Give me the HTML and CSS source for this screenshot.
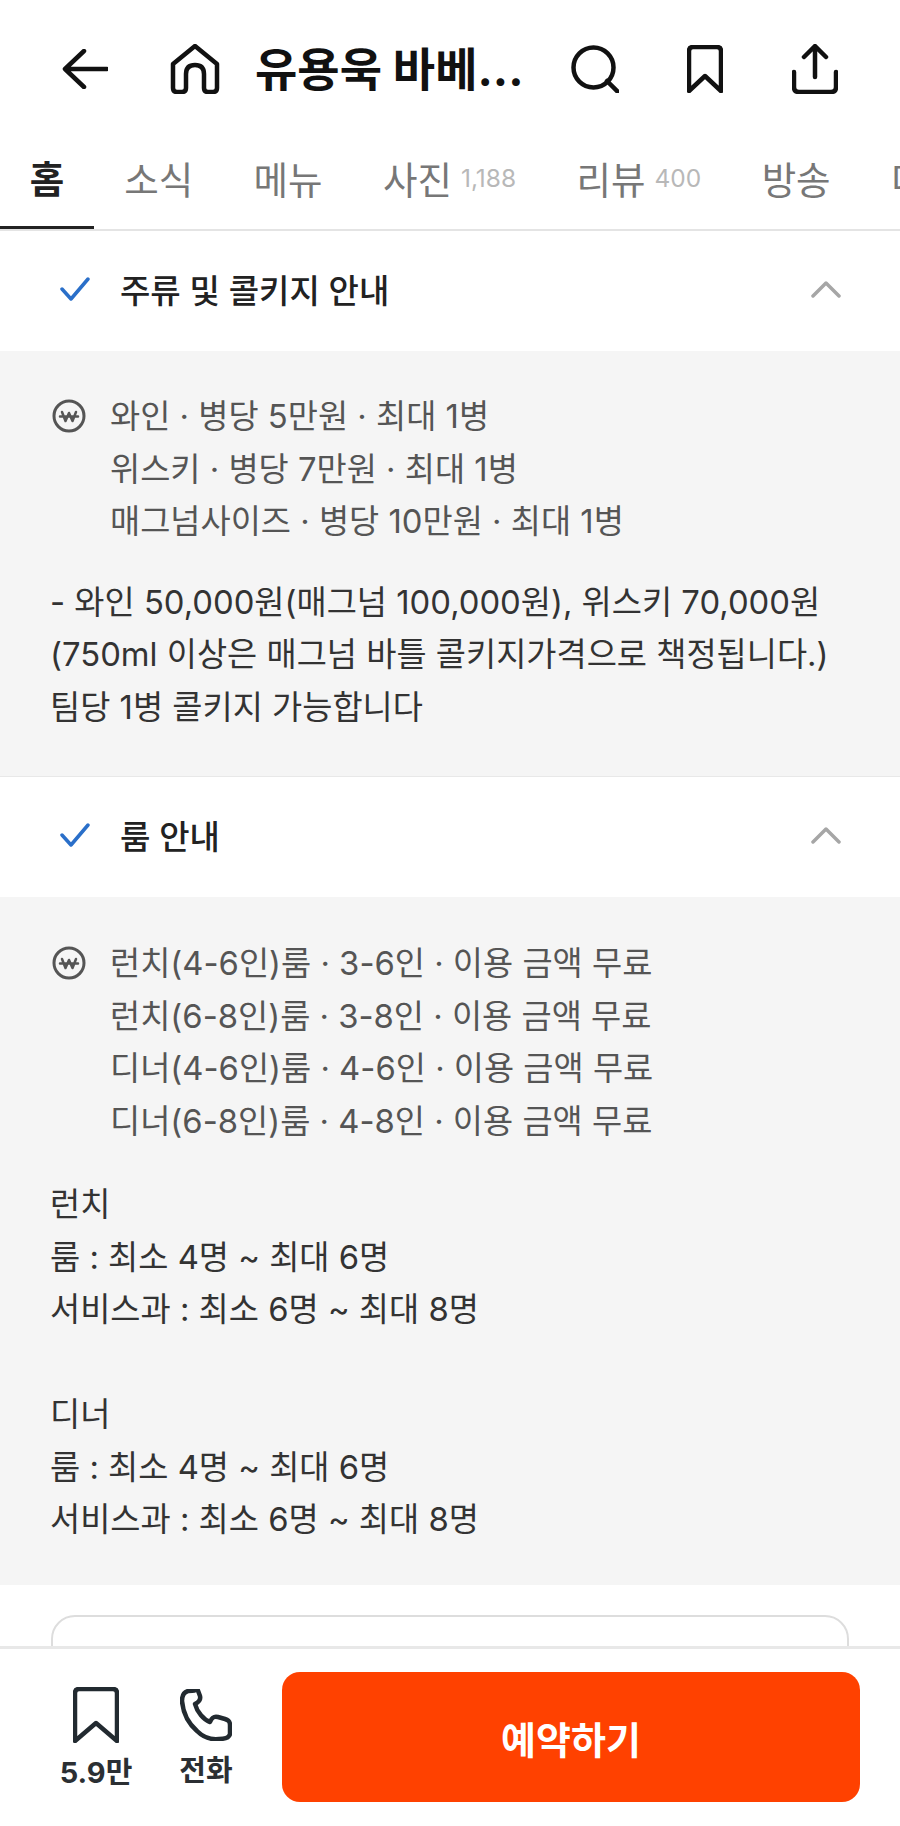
FILE: index.html
```html
<!DOCTYPE html>
<html lang="ko">
<head>
    <meta charset="UTF-8">
    <meta name="viewport" content="width=device-width, initial-scale=1.0">
    <title>유용욱 바베큐</title>
    <link rel="stylesheet" href="styles.css">
</head>
<body>
<div class="page">
    <header class="topbar">
        <svg class="icon icon-back" viewBox="0 0 46 40"><path d="M22 2 3 20l19 18M3 20h42"/></svg>
        <svg class="icon icon-home" viewBox="0 0 50 50"><path d="M25 2 3 20v24q0 4 4 4h5q4 0 4-4V30q0-9 9-9t9 9v14q0 4 4 4h5q4 0 4-4V20z"/></svg>
        <h1 class="title">유용욱 바베...</h1>
        <svg class="icon icon-search" viewBox="0 0 48 48"><circle cx="22.500" cy="22.500" r="20"/><path d="m36 36 11 11"/></svg>
        <svg class="icon icon-bookmark" viewBox="0 0 36 48"><path d="M6 2h24q4 0 4 4v40L18 31 2 46V6q0-4 4-4z"/></svg>
        <svg class="icon icon-share" viewBox="0 0 46 50"><path d="M23 33V3M12 13 23 2l11 11M2 28v15q0 5 5 5h32q5 0 5-5V28"/></svg>
    </header>

    <nav class="tabs">
        <a class="tab tab-active">홈</a>
        <a class="tab">소식</a>
        <a class="tab">메뉴</a>
        <a class="tab">사진<span class="count">1,188</span></a>
        <a class="tab">리뷰<span class="count">400</span></a>
        <a class="tab">방송</a>
        <a class="tab">더보기</a>
    </nav>

    <main class="content">
        <section class="section">
            <div class="section-head">
                <svg class="check" viewBox="0 0 30 24"><path d="m2 12 9 10L28 2"/></svg>
                <h2>주류 및 콜키지 안내</h2>
                <svg class="chevron" viewBox="0 0 30 18"><path d="M2 16 15 3l13 13"/></svg>
            </div>
            <div class="section-body">
                <div class="price">
                    <svg class="won" viewBox="0 0 34 34"><circle cx="17" cy="17" r="15"/><path class="won-mark" d="m10 13 3.500 9 3.500-8 3.500 8 3.500-9M8 17.500h18"/></svg>
                    <ul>
                        <li>와인 · 병당 5만원 · 최대 1병</li>
                        <li>위스키 · 병당 7만원 · 최대 1병</li>
                        <li>매그넘사이즈 · 병당 10만원 · 최대 1병</li>
                    </ul>
                </div>
                <p class="note">- 와인 50,000원(매그넘 100,000원), 위스키 70,000원<br>(750ml 이상은 매그넘 바틀 콜키지가격으로 책정됩니다.)<br>팀당 1병 콜키지 가능합니다</p>
            </div>
        </section>

        <section class="section section-rule">
            <div class="section-head">
                <svg class="check" viewBox="0 0 30 24"><path d="m2 12 9 10L28 2"/></svg>
                <h2>룸 안내</h2>
                <svg class="chevron" viewBox="0 0 30 18"><path d="M2 16 15 3l13 13"/></svg>
            </div>
            <div class="section-body">
                <div class="price">
                    <svg class="won" viewBox="0 0 34 34"><circle cx="17" cy="17" r="15"/><path class="won-mark" d="m10 13 3.500 9 3.500-8 3.500 8 3.500-9M8 17.500h18"/></svg>
                    <ul>
                        <li>런치(4-6인)룸 · 3-6인 · 이용 금액 무료</li>
                        <li>런치(6-8인)룸 · 3-8인 · 이용 금액 무료</li>
                        <li>디너(4-6인)룸 · 4-6인 · 이용 금액 무료</li>
                        <li>디너(6-8인)룸 · 4-8인 · 이용 금액 무료</li>
                    </ul>
                </div>
                <p class="note">런치<br>룸 : 최소 4명 ~ 최대 6명<br>서비스과 : 최소 6명 ~ 최대 8명<br><br>디너<br>룸 : 최소 4명 ~ 최대 6명<br>서비스과 : 최소 6명 ~ 최대 8명</p>
            </div>
        </section>

        <div class="card"></div>
    </main>

    <footer class="actionbar">
        <div class="action action-save">
            <svg class="action-icon" viewBox="0 0 46 56"><path d="M6 2h34q4 0 4 4v48L23 36 2 54V6q0-4 4-4z"/></svg>
            <span>5.9만</span>
        </div>
        <div class="action action-call">
            <svg class="action-icon" viewBox="0 0 52 52"><path d="M8 2c-4 1-6 5-6 10 1 12 7 23 15 30 5 5 13 9 22 8 6 0 10-1 11-5v-9c0-4-2-5-5-6l-7-2c-4-1-6 0-8 5-6-2-13-10-15-18 4-2 6-4 5-8l-3-8C16 3 13 1 8 2z"/></svg>
            <span>전화</span>
        </div>
        <button class="reserve" type="button">예약하기</button>
    </footer>
</div>
</body>
</html>
```

FILE: styles.css
```css
* {
    box-sizing: border-box;
}
body {
    margin: 0;
    font-family: Inter, "Noto Sans CJK KR", sans-serif;
    color: #333;
    background: #fff;
}
.page {
    display: flex;
    flex-direction: column;
    height: 1826px;
    overflow: hidden;
}
svg {
    display: block;
    flex: none;
    fill: none;
    stroke-linecap: round;
    stroke-linejoin: round;
}

/* top bar */
.topbar {
    display: flex;
    align-items: center;
    height: 138px;
    padding-left: 62px;
}
.icon {
    stroke: #111;
    stroke-width: 4.5;
}
.icon-back {
    width: 46px;
    height: 40px;
    margin-right: 62px;
}
.icon-home {
    width: 50px;
    height: 50px;
    margin-right: 35px;
}
.title {
    width: 316px;
    margin: 0;
    font-size: 46px;
    font-weight: 700;
    line-height: 50px;
    color: #111;
    white-space: nowrap;
}
.icon-search {
    width: 48px;
    height: 48px;
    margin-right: 68px;
}
.icon-bookmark {
    width: 36px;
    height: 48px;
    margin-right: 69px;
}
.icon-share {
    width: 46px;
    height: 50px;
}

/* tabs */
.tabs {
    display: flex;
    height: 93px;
    border-bottom: 2px solid #e4e4e4;
    overflow: hidden;
}
.tab {
    display: flex;
    flex: none;
    align-items: center;
    height: 91px;
    padding: 0 30.200px 12px;
    font-size: 37.500px;
    color: #777;
    white-space: nowrap;
}
.tab-active {
    width: 94px;
    padding: 0 0 12px;
    justify-content: center;
    font-weight: 700;
    color: #222;
    border-bottom: 3px solid #222;
}
.count {
    margin-left: 9px;
    font-size: 24.500px;
    color: #b8b8b8;
}

/* sections */
.content {
    flex: 1;
    min-height: 0;
    overflow: hidden;
}
.section-rule {
    border-top: 1px solid #e8e8e8;
}
.section-head {
    display: flex;
    align-items: center;
    height: 120px;
    padding: 0 60px 4px;
}
.section-head h2 {
    flex: 1;
    margin: 0 0 0 30px;
    font-size: 33px;
    font-weight: 500;
    color: #222;
}
.check {
    width: 30px;
    height: 24px;
    stroke: #2a6fc9;
    stroke-width: 3.500;
}
.chevron {
    width: 30px;
    height: 18px;
    margin-right: -1px;
    stroke: #a6a6a6;
    stroke-width: 3.500;
}
.section-body {
    padding: 39px 51px 43px 50px;
    background: #f5f5f5;
}
.section-rule .section-body {
    padding-top: 40px;
    padding-bottom: 39px;
}
.section-rule .note {
    margin-top: 31px;
}
.price {
    display: flex;
    gap: 24px;
    font-size: 32.800px;
    line-height: 52.500px;
    color: #555;
}
.price ul {
    margin: 0;
    padding: 0;
    list-style: none;
}
.won {
    width: 34px;
    height: 34px;
    margin-top: 9px;
    margin-left: 2px;
    stroke: #555;
    stroke-width: 3;
}
.won-mark {
    stroke-width: 2.500;
}
.note {
    margin: 28px 0 0;
    font-size: 32.800px;
    line-height: 52.500px;
    color: #333;
}
.card {
    height: 80px;
    margin: 30px 51px 0;
    border: 2px solid #ddd;
    border-radius: 24px;
}

/* bottom bar */
.actionbar {
    display: flex;
    align-items: center;
    flex: none;
    height: 180px;
    padding: 23px 40px 24px 0;
    background: #fff;
    border-top: 3px solid #e8e8e8;
}
.action {
    display: flex;
    flex-direction: column;
    align-items: center;
    gap: 12px;
    padding-top: 3px;
    font-size: 29px;
    line-height: 36px;
    font-weight: 700;
    color: #2b2f33;
    white-space: nowrap;
}
.action-save {
    width: 70px;
    margin-left: 61px;
}
.action-call {
    width: 52px;
    margin-left: 49px;
}
.action-icon {
    stroke: #222a30;
    stroke-width: 4.500;
}
.action-save .action-icon {
    width: 46px;
    height: 56px;
}
.action-call .action-icon {
    width: 52px;
    height: 52px;
}
.reserve {
    flex: 1;
    height: 130px;
    margin-left: 50px;
    border: none;
    border-radius: 18px;
    font-family: inherit;
    font-size: 38px;
    font-weight: 700;
    color: #fff;
    background: #ff4100;
}
```
